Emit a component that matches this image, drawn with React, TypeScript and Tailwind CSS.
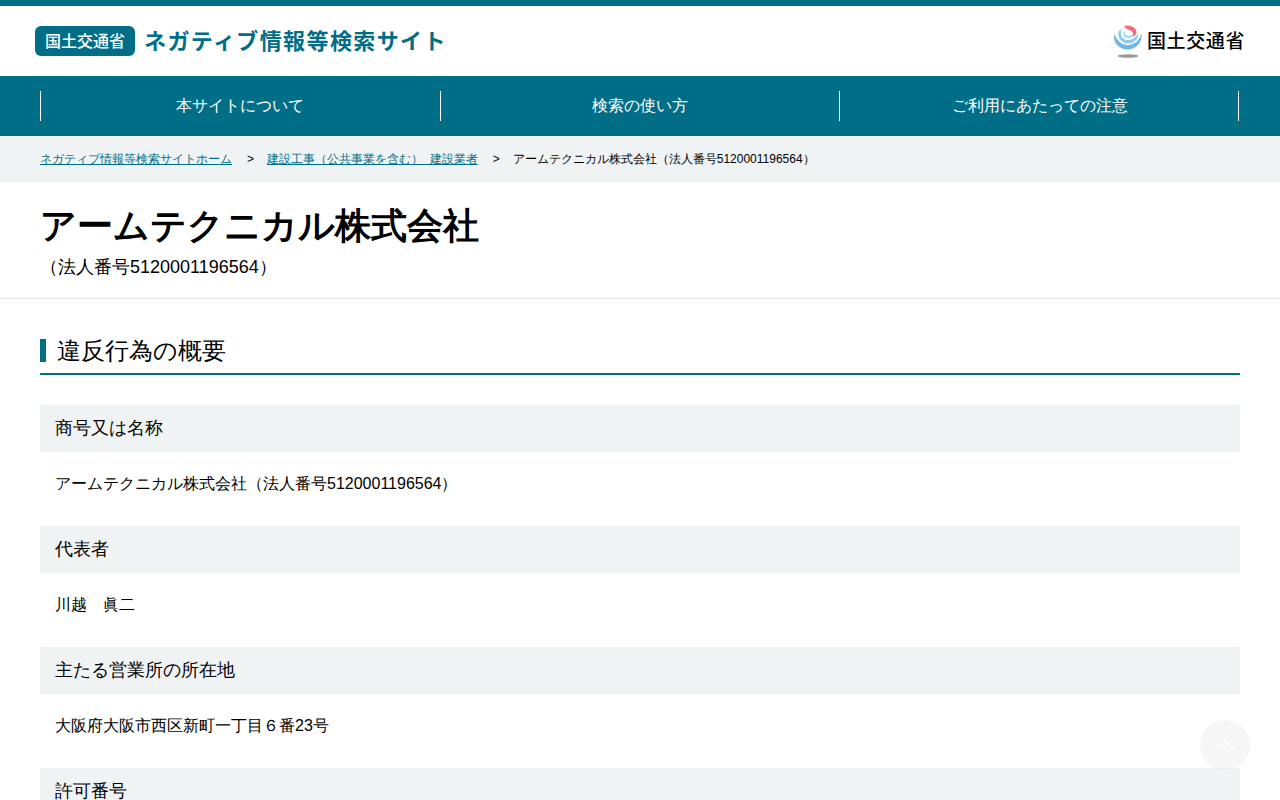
import React from "react";

function Logo() {
  return (
    <svg width="30" height="34" viewBox="0 0 30 34" className="shrink-0 mt-[2px]">
      <path d="M1.5 9 C-1 17 6 24.5 14.5 24.5 C23 24.5 30 17 28.5 8 C27 15 21.5 20 15 20 C8 20 3.5 15 1.5 9Z" fill="#6db6e6" />
      <path d="M6 6 C3.5 11 8 18.5 15 18.5 C21 18.5 25.5 14 25.5 8 C23 12.5 19 15.5 14.5 15 C9.5 14.5 6.5 11 8.5 4 C7.5 4.5 6.8 5 6 6Z" fill="#8fcaee" />
      <path d="M10.5 8 C10 11.5 13.5 14 17 13 C20 12 22 9.5 21.5 6.5 C20 9.5 17 11.5 14 10.5 C12 9.5 11.5 8 12.5 6 C11.5 6.3 10.8 7 10.5 8Z" fill="#a9d6f1" />
      <path d="M11 1 C17 -1 23.5 2.5 23.5 7 C23.5 9 22 11 20 12 C21 9.5 20 6.5 17.5 5.5 C15 4.5 12.5 4 11 1Z" fill="#ee6e73" />
      <ellipse cx="15" cy="31" rx="10.5" ry="1.7" fill="#9a9a9a" />
    </svg>
  );
}

function Section({ title, children }: { title: string; children?: React.ReactNode }) {
  return (
    <div>
      <div className="bg-[#f0f3f4] h-[47px] px-[15px] flex items-center text-[18px] text-black">{title}</div>
      <div className="h-[74px] px-[15px] pt-[20px] text-[16px] leading-[24px] text-black">{children}</div>
    </div>
  );
}

export default function App() {
  return (
    <div className="h-[800px] overflow-hidden bg-white text-black font-['Liberation_Sans',sans-serif]">
      <header className="border-t-[6px] border-[#006e87] h-[76px] flex items-center justify-between pl-[35px] pr-[35px]">
        <div className="flex items-center gap-[9px]">
          <span className="bg-[#006e87] text-white rounded-[6px] w-[100px] h-[30px] flex items-center justify-center text-[16px] leading-[22px] pb-[2px] font-medium font-['Noto_Sans_CJK_JP',sans-serif]">国土交通省</span>
          <span className="text-[#006e87] text-[22px] leading-[30px] pb-[4px] font-bold tracking-[1.4px] font-['Noto_Sans_CJK_JP',sans-serif]">ネガティブ情報等検索サイト</span>
        </div>
        <div className="flex items-center gap-[4px]">
          <Logo />
          <span className="text-[19px] leading-[28px] pb-[2px] tracking-[0.6px] font-medium text-black font-['Noto_Sans_CJK_JP',sans-serif]">国土交通省</span>
        </div>
      </header>

      <nav className="bg-[#006e87] h-[60px] px-[40px] flex items-center text-white text-[16px]">
        <a className="w-[400px] h-[30px] pr-[1px] flex items-center justify-center border-l border-white">本サイトについて</a>
        <a className="w-[399px] h-[30px] flex items-center justify-center border-l border-white">検索の使い方</a>
        <a className="w-[400px] h-[30px] pl-[2px] flex items-center justify-center border-x border-white">ご利用にあたっての注意</a>
      </nav>

      <div className="bg-[#f0f3f4] h-[46px] px-[40px] flex items-center text-[12px]">
        <a className="text-[#006e87] underline">ネガティブ情報等検索サイトホーム</a>
        <span className="ml-[15px] mr-[13px]">&gt;</span>
        <a className="text-[#006e87] underline">建設工事（公共事業を含む）&nbsp;&nbsp;建設業者</a>
        <span className="ml-[15px] mr-[13px]">&gt;</span>
        <span>アームテクニカル株式会社（法人番号5120001196564）</span>
      </div>

      <div className="h-[117px] border-b border-[#e5e5e5] px-[40px] pt-[20px]">
        <h1 className="text-[36px] font-bold leading-[48px]">アームテクニカル株式会社</h1>
        <p className="text-[18px] leading-[27px] mt-[4px]">（法人番号5120001196564）</p>
      </div>

      <main className="px-[40px] pt-[32px]">
        <h2 className="h-[44px] border-b-2 border-[#006e87] flex items-start text-[24px] leading-[38px] mb-[30px]">
          <span className="border-l-[6px] border-[#006e87] pl-[11px] h-[23px] mt-[8px] flex items-center">違反行為の概要</span>
        </h2>
        <Section title="商号又は名称">アームテクニカル株式会社（法人番号5120001196564）</Section>
        <Section title="代表者">川越　眞二</Section>
        <Section title="主たる営業所の所在地">大阪府大阪市西区新町一丁目６番23号</Section>
        <Section title="許可番号">国土交通大臣</Section>
      </main>

      <button className="fixed right-[30px] bottom-[30px] w-[50px] h-[50px] rounded-full bg-[#e8e8e8]/40 flex items-center justify-center">
        <svg width="18" height="10" viewBox="0 0 18 10" fill="none" stroke="#fff" strokeWidth="1.5"><path d="M1 9 L9 1 L17 9" /></svg>
      </button>
    </div>
  );
}
